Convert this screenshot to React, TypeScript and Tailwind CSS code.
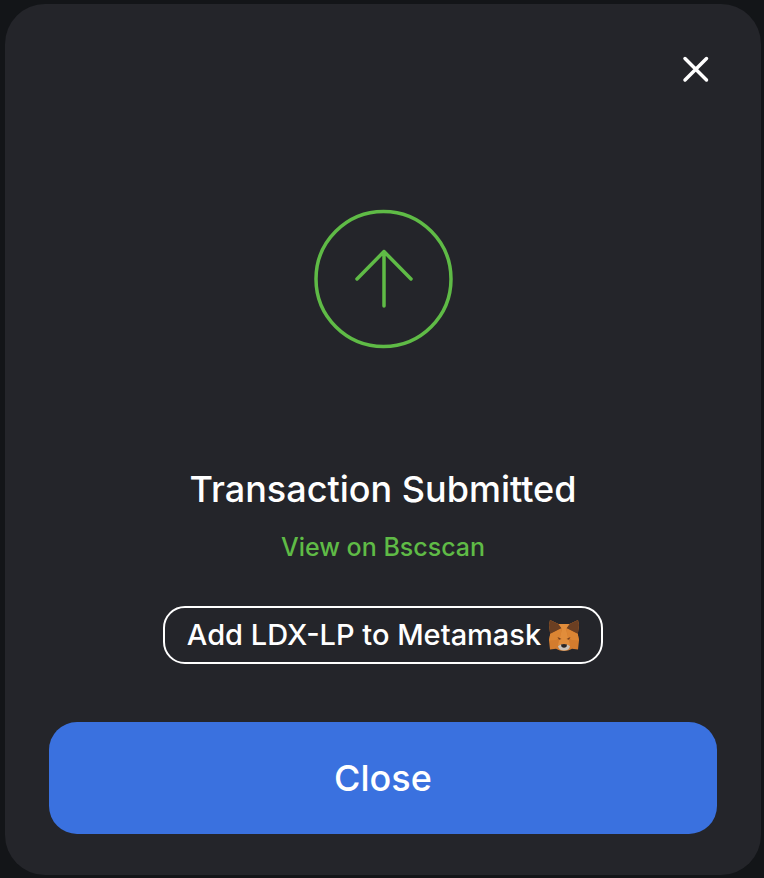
function CloseIcon() {
  return (
    <svg viewBox="0 0 48 48" className="size-12" fill="none" stroke="currentColor" strokeWidth="3.500" strokeLinecap="round" aria-hidden="true">
      <path d="M13 13.500 34.500 35M34.500 13.500 13 35" />
    </svg>
  );
}

function SubmittedIcon() {
  return (
    <svg viewBox="0 0 140 140" className="size-[140px] text-[#5fbb46]" fill="none" stroke="currentColor" strokeWidth="3.500" strokeLinecap="round" strokeLinejoin="round" aria-hidden="true">
      <circle cx="70.500" cy="70" r="67.500" />
      <path d="M71 97V42.500M44 70 71 42.500 98 70" />
    </svg>
  );
}

function FoxIcon() {
  return (
    <svg viewBox="0 0 30 31" className="h-[31px] w-[30px]" aria-hidden="true">
      <path d="M1 0 9.500 4h11L29 0l1 5-1.200 9L30 20.500l-1 9-6-.7C20 30.500 18 31 15 31s-5-.5-8-2.200l-6 .7-1-9L1.200 14 0 5Z" fill="#d37c2e" />
      <path d="M1 0 9.500 4 13 8 1.200 14 0 5ZM29 0l-8.500 4L17 8l11.800 6L30 5Z" fill="#6b3f22" />
      <path d="M9.500 4h11L17 9l2 8 2 8H9l2-8 2-8Z" fill="#e18d3b" />
      <path d="M1.200 14 13 8l-2 9-4 3-7 .5ZM28.800 14 17 8l2 9 4 3 7 .5Z" fill="#dc8533" />
      <path d="M9 26c2-1 3.500-1.700 6-1.700s4 .7 6 1.700c-.5 3-2.500 4.500-6 4.500S9.500 29 9 26Z" fill="#cbc2b8" />
      <path d="M12 24.500c2-.8 4-.8 6 0l-.5 2.300Q15 28.500 12.500 26.800Z" fill="#292524" />
      <path d="m8.500 17 4 2-2.500.8ZM21.500 17l-4 2 2.500.8Z" fill="#713c1d" />
    </svg>
  );
}

export default function App() {
  return (
    <div className="min-h-screen bg-[#131518] pt-1 pr-[3px] pb-[3px] pl-[5px] font-['Inter',sans-serif] font-medium text-white">
      <main role="dialog" aria-labelledby="dialog-title" className="flex flex-col items-center rounded-[40px] bg-[#24252a] px-11 py-[41px]">
        <button type="button" aria-label="Dismiss" className="-mr-[3px] self-end">
          <CloseIcon />
        </button>
        <div className="py-[116px]">
          <SubmittedIcon />
        </div>
        <h1 id="dialog-title" className="text-center text-[36px] leading-[48px]">Transaction Submitted</h1>
        <a href="#transaction" className="mt-[18px] text-[25px] leading-8 text-[#5fbb46]">View on Bscscan</a>
        <button type="button" className="mt-[43px] flex h-[58px] items-center gap-2 rounded-[22px] border-2 border-white px-[22px] text-[29px] leading-8">
          Add LDX-LP to Metamask
          <FoxIcon />
        </button>
        <button type="button" className="mt-[58px] h-28 w-full rounded-[28px] bg-[#3a71df] text-[36px] leading-[48px]">Close</button>
      </main>
    </div>
  );
}
